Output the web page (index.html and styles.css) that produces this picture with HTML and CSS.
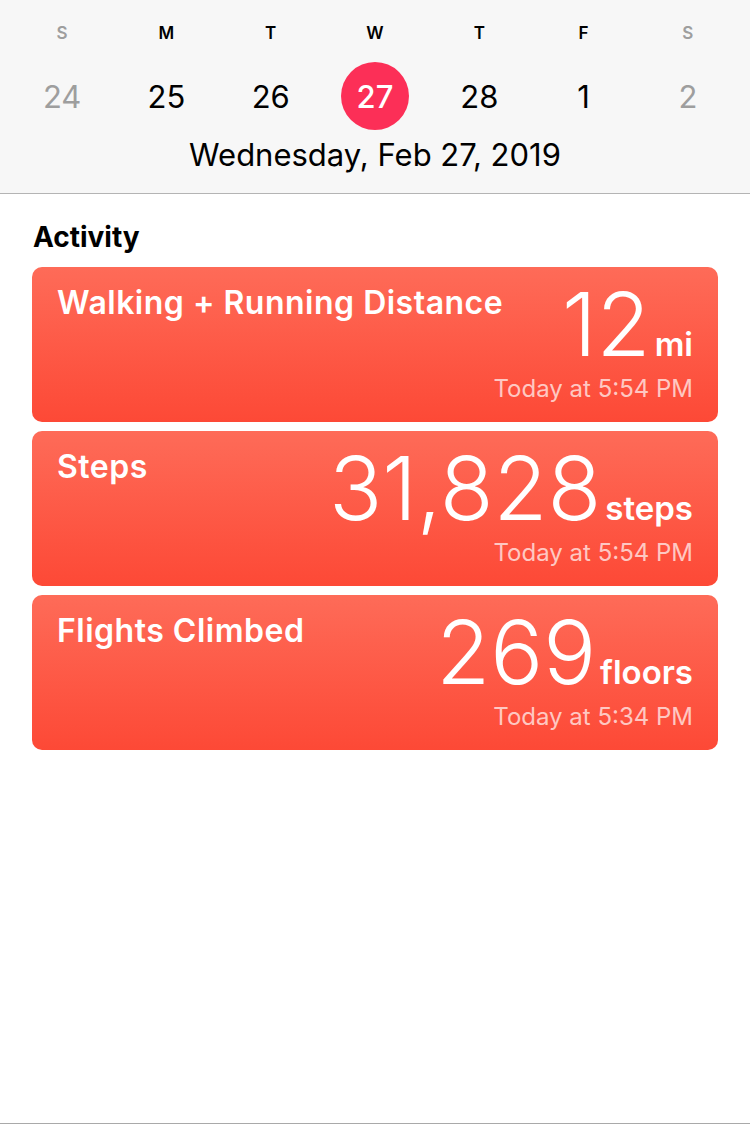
FILE: index.html
```html
<!DOCTYPE html>
<html lang="en">
<head>
    <meta charset="UTF-8">
    <meta name="viewport" content="width=device-width, initial-scale=1.0">
    <title>Health - Activity</title>
    <link rel="stylesheet" href="styles.css">
</head>
<body>
    <div class="page">
        <div class="week-header">
            <div class="week-row">
                <div class="day weekend">S</div>
                <div class="day">M</div>
                <div class="day">T</div>
                <div class="day">W</div>
                <div class="day">T</div>
                <div class="day">F</div>
                <div class="day weekend">S</div>
            </div>
            <div class="week-row">
                <div class="date weekend">24</div>
                <div class="date">25</div>
                <div class="date">26</div>
                <div class="date"><span class="selected">27</span></div>
                <div class="date">28</div>
                <div class="date">1</div>
                <div class="date weekend">2</div>
            </div>
            <div class="full-date">Wednesday, Feb 27, 2019</div>
        </div>

        <div class="content">
            <h2 class="section-title">Activity</h2>

            <div class="card">
                <div class="card-title">Walking + Running Distance</div>
                <div class="card-data">
                    <div class="value"><span class="number">12</span><span class="unit">mi</span></div>
                    <div class="time">Today at 5:54 PM</div>
                </div>
            </div>

            <div class="card">
                <div class="card-title">Steps</div>
                <div class="card-data">
                    <div class="value"><span class="number">31,828</span><span class="unit">steps</span></div>
                    <div class="time">Today at 5:54 PM</div>
                </div>
            </div>

            <div class="card">
                <div class="card-title">Flights Climbed</div>
                <div class="card-data">
                    <div class="value"><span class="number">269</span><span class="unit">floors</span></div>
                    <div class="time">Today at 5:34 PM</div>
                </div>
            </div>
        </div>

        <div class="tab-bar"></div>
    </div>
</body>
</html>
```

FILE: styles.css
```css
body {
    font-family: Inter, "Noto Sans", sans-serif;
    margin: 0;
    padding: 0;
    background-color: #fff;
    color: #000;
}
.page {
    height: 1126px;
    display: flex;
    flex-direction: column;
}
.week-header {
    background-color: #f7f7f7;
    border-bottom: 1px solid #b4b4b4;
    padding: 21px 10px 0;
    height: 172px;
}
.week-row {
    display: grid;
    grid-template-columns: repeat(7, 1fr);
}
.day {
    text-align: center;
    font-size: 17px;
    font-weight: 600;
    line-height: 24px;
}
.date {
    height: 68px;
    margin-top: 17px;
    display: flex;
    align-items: center;
    justify-content: center;
    font-size: 31px;
    font-weight: 400;
}
.weekend {
    color: #9e9e9e;
}
.selected {
    width: 68px;
    height: 68px;
    border-radius: 50%;
    background-color: #fc2f57;
    color: #fff;
    font-weight: 500;
    display: flex;
    align-items: center;
    justify-content: center;
}
.full-date {
    text-align: center;
    font-size: 31px;
    line-height: 36px;
    margin-top: 7px;
}
.content {
    flex: 1;
    padding: 0 32px;
}
.section-title {
    font-size: 28px;
    font-weight: 700;
    line-height: 34px;
    margin: 26px 0 13px 1px;
}
.card {
    height: 155px;
    margin-bottom: 9px;
    border-radius: 10px;
    background: linear-gradient(to bottom, #fe6b58, #fd4936);
    color: #fff;
    display: flex;
    justify-content: space-between;
    padding: 0 25px;
    box-sizing: border-box;
}
.card-title {
    flex: 0 1 auto;
    min-width: 0;
    font-size: 32px;
    font-weight: 600;
    letter-spacing: 0.5px;
    line-height: 38px;
    margin-top: 17px;
    white-space: nowrap;
}
.card-data {
    display: flex;
    flex-direction: column;
    align-items: flex-end;
    flex-shrink: 0;
    white-space: nowrap;
}
.value {
    display: flex;
    align-items: baseline;
    line-height: 1;
    margin-top: 13px;
}
.number {
    font-size: 88px;
    font-weight: 300;
}
.unit {
    font-size: 33px;
    font-weight: 600;
    margin-left: 4px;
}
.time {
    font-size: 24px;
    color: rgba(255, 255, 255, 0.7);
    margin-top: 6px;
}
.tab-bar {
    height: 2px;
    border-top: 1px solid #a9a9a9;
}
```
